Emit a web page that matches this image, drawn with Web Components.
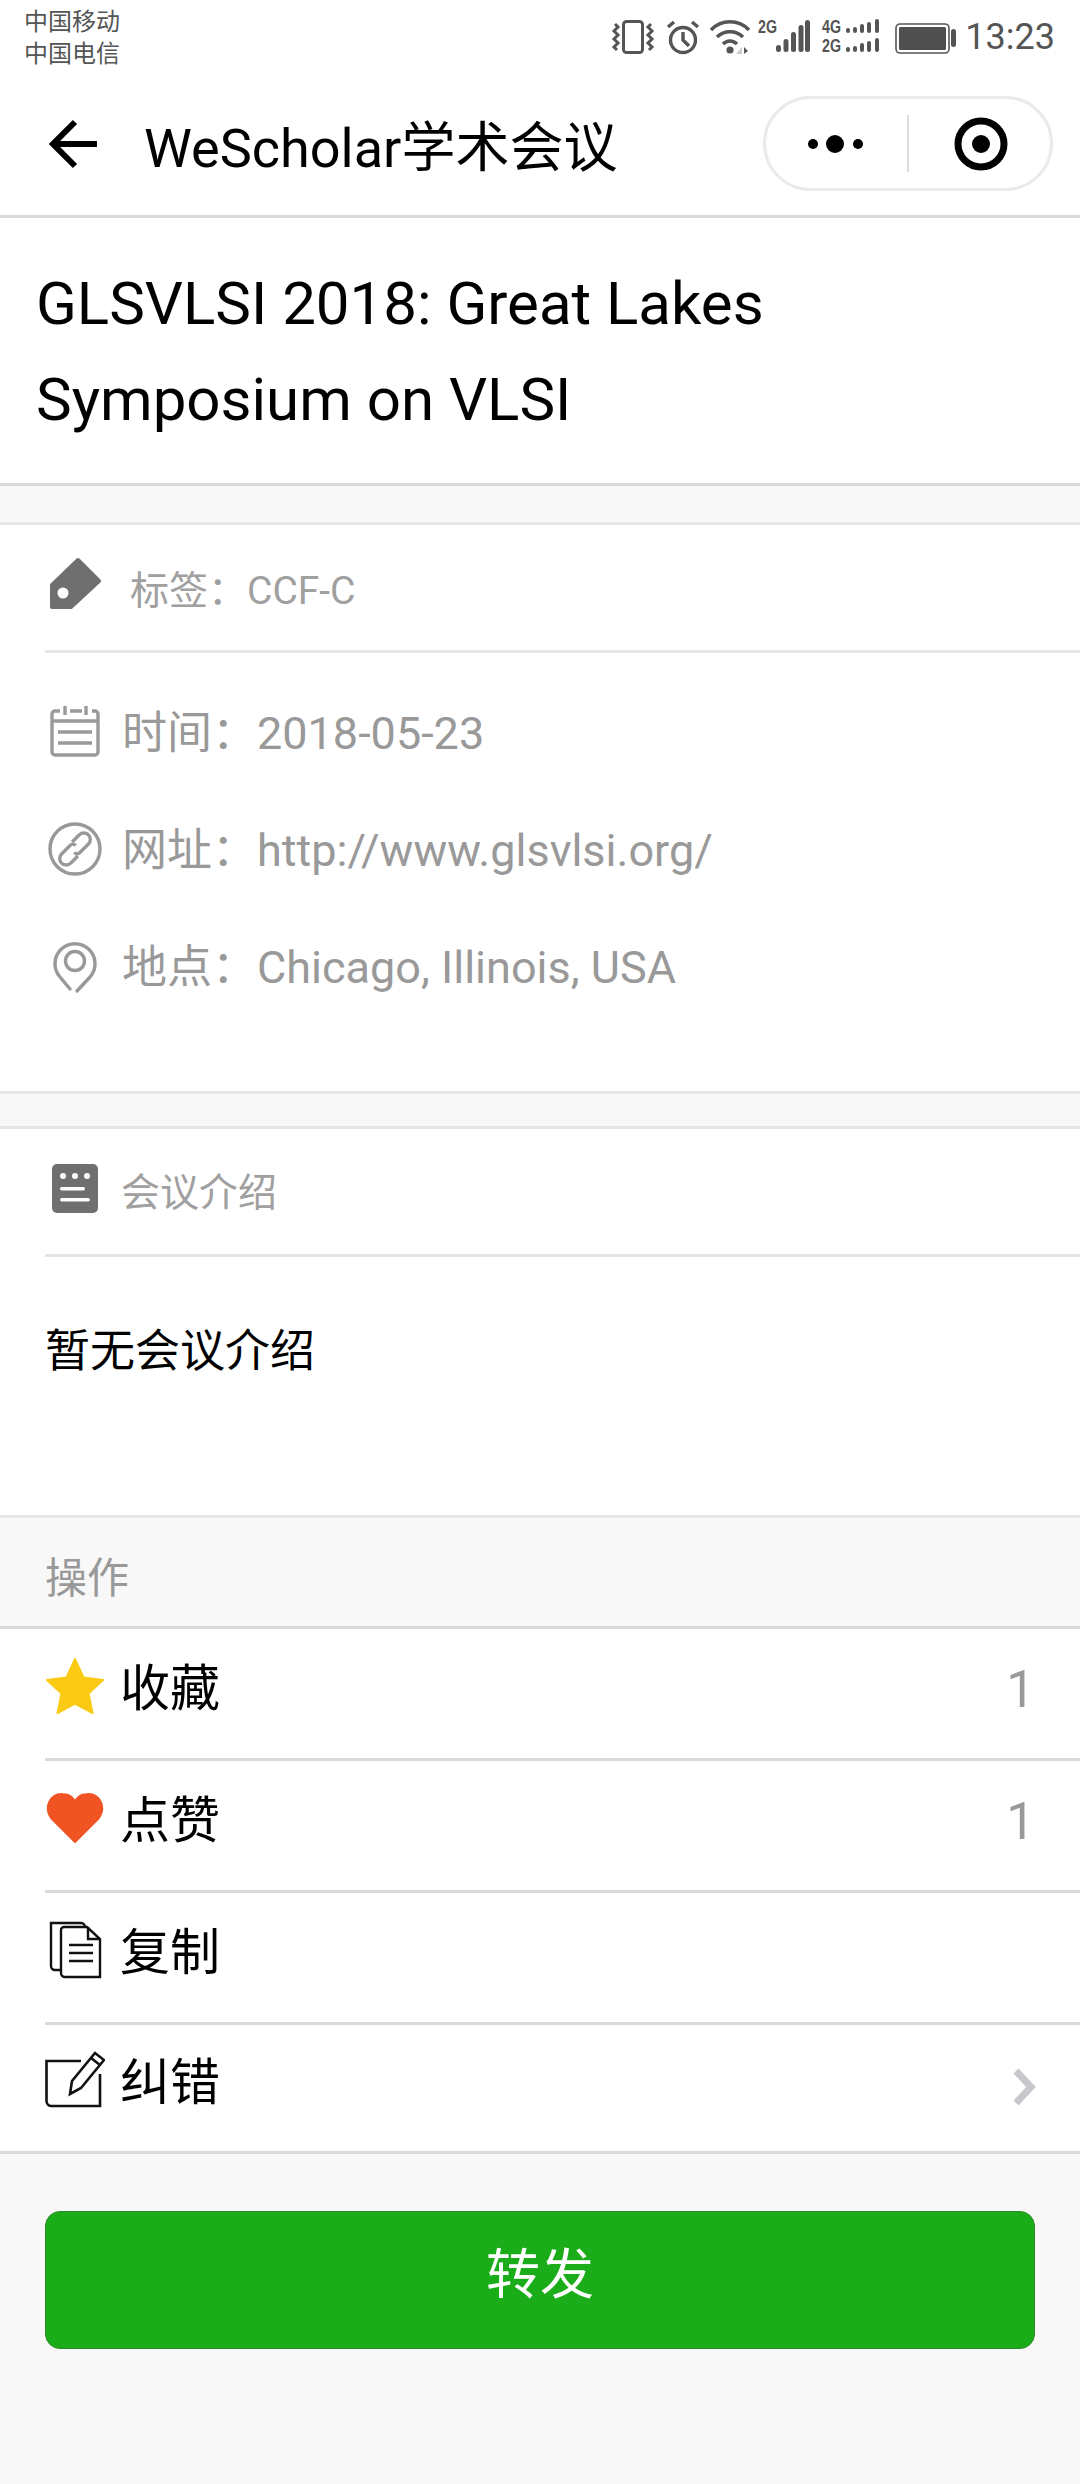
<!DOCTYPE html>
<html lang="zh">
<head>
<meta charset="utf-8">
<title>WeScholar</title>
<style>
  html, body { margin: 0; padding: 0; background: #f8f8f8; }
  body { width: 1080px; height: 2484px; overflow: hidden; font-family: Roboto, "Noto Sans CJK SC", sans-serif; }
</style>
</head>
<body>
  <status-bar></status-bar>
  <nav-bar title="WeScholar学术会议"></nav-bar>
  <conf-title>GLSVLSI 2018: Great Lakes Symposium on VLSI</conf-title>

  <page-gap></page-gap>
  <conf-card>
    <card-head icon="tag" style="--gap:25px;--pad:2px;--icon-top:-2px">标签：CCF-C</card-head>
    <div style="height:18px"></div>
    <info-row icon="calendar">时间：2018-05-23</info-row>
    <info-row icon="link">网址：http://www.glsvlsi.org/</info-row>
    <info-row icon="pin">地点：Chicago, Illinois, USA</info-row>
    <div style="height:69px"></div>
  </conf-card>

  <page-gap short></page-gap>
  <conf-card>
    <card-head icon="notes" style="--gap:16px;--pad:5px;--icon-top:0px">会议介绍</card-head>
    <intro-text>暂无会议介绍</intro-text>
  </conf-card>

  <action-title>操作</action-title>
  <action-list>
    <action-row icon="star" count="1">收藏</action-row>
    <action-row icon="heart" count="1">点赞</action-row>
    <action-row icon="copy">复制</action-row>
    <action-row icon="edit" arrow last>纠错</action-row>
  </action-list>
  <share-button>转发</share-button>

<script>
// icons are all drawn in a 60x60 box
const ICONS = {
  tag: `<path d="M33 4 L54 25 L26 51 H7 V29 Z" fill="#6f6f6f" stroke="#6f6f6f" stroke-width="4" stroke-linejoin="round"/><circle cx="18" cy="37" r="5.5" fill="#fff"/>`,
  calendar: `<g fill="none" stroke="#999" stroke-width="3.4"><path d="M15 9 H10 a3 3 0 0 0 -3 3 V50 a3 3 0 0 0 3 3 H50 a3 3 0 0 0 3 -3 V12 a3 3 0 0 0 -3 -3 H47"/><path d="M25 9 H37 M20 4 V13 M41 4 V13 M7 19 H53 M13 30 H47 M13 41 H47"/></g>`,
  link: `<g fill="none" stroke="#999" stroke-width="3.4"><circle cx="30" cy="30" r="25"/><g transform="rotate(-45 30 30)"><path d="M27 37 H17 a6.5 6.500 0 0 1 0 -13 H29 a4 4 0 0 1 4 4"/><path d="M33 23 H43 a6.5 6.500 0 0 1 0 13 H31 a4 4 0 0 1 -4 -4"/></g></g>`,
  pin: `<g fill="none" stroke="#999" stroke-width="3.4" stroke-linecap="round"><path d="M25 53 L15 41 A20 20 0 1 1 45 41 L32 55"/><circle cx="30" cy="25" r="9.5"/></g>`,
  notes: `<rect x="7" y="5" width="46" height="49" rx="5" fill="#6f6f6f"/><g fill="#fff"><circle cx="18" cy="17" r="3"/><circle cx="30" cy="17" r="3"/><circle cx="42" cy="17" r="3"/><rect x="15" y="28" width="25" height="3.5" rx="1.7"/><rect x="15" y="39" width="30" height="3.5" rx="1.7"/></g>`,
  star: `<path d="M30 3 L38.5 21.5 L58 24 L43.5 37.5 L47.5 57 L30 47.5 L12.5 57 L16.5 37.5 L2 24 L21.5 21.5 Z" fill="#fbca14" stroke="#fbca14" stroke-width="2" stroke-linejoin="round"/>`,
  heart: `<path d="M30 54 L7 31 C-2 20 5 5 18 6 C24 6 28 10 30 13 C32 10 36 6 42 6 C55 5 62 20 53 31 Z" fill="#f15423" stroke="#f15423" stroke-width="2" stroke-linejoin="round"/>`,
  copy: `<g fill="none" stroke="#111" stroke-width="2.4"><path d="M15 50 H10 a4 4 0 0 1 -4 -4 V3 H36 a4 4 0 0 1 4 4"/><path d="M42 7 H19 a3 3 0 0 0 -3 3 V53 a4 4 0 0 0 4 4 H55 V19 Z"/><path d="M43 7 V19 H55 M24 25 H48 M24 33 H48 M24 41 H48"/></g>`,
  edit: `<g fill="none" stroke="#111" stroke-width="2.6"><path d="M36 11 H1.5 V51 a5 5 0 0 0 5 5 H55 V24"/><path d="M25 44 L27 31 L50 3 L59 10 L36 38 Z M46 8 L55 15"/></g>`
};

class StatusBar extends HTMLElement {
  constructor() {
    super();
    const shadow = this.attachShadow({ mode: 'open' });
    shadow.innerHTML = `
      <style>
        :host { display: flex; justify-content: space-between; height: 72px; background: #fff; color: #555; }
        .carrier { padding: 4px 0 0 24px; font-size: 24px; line-height: 32px; font-family: "Noto Sans CJK SC", sans-serif; }
        .right { display: flex; align-items: flex-start; padding: 16px 0 0 0; }
        svg { display: block; }
        .time { font-size: 36px; line-height: 40px; margin: 1px 25px 0 8px; color: #555; }
        text { font-family: "Liberation Sans", sans-serif; font-weight: 700; font-size: 19px; fill: #555; }
      </style>
      <div class="carrier">中国移动<br>中国电信</div>
      <div class="right">
        <svg width="346" height="40" viewBox="0 0 346 40">
          <!-- vibrate -->
          <g fill="none" stroke="#555" stroke-width="3">
            <rect x="12.5" y="5.5" width="19" height="31" rx="3"/>
            <path d="M4 8 l3 3 l-4 4 l4 4 l-4 4 l4 4 l-4 4 l3 3 M40 8 l-3 3 l4 4 l-4 4 l4 4 l-4 4 l4 4 l-3 3"/>
          </g>
          <!-- alarm -->
          <g fill="none" stroke="#555" stroke-width="3.4">
            <circle cx="72" cy="24" r="12.5"/>
            <path d="M72 16 V24 L78 30 M57 11 L63 6 M87 11 L81 6"/>
          </g>
          <!-- wifi -->
          <g fill="none" stroke="#555" stroke-width="3.4">
            <path d="M100 14 C110 3 128 3 138 14 M106 21 C113 14 125 14 132 21 M112 28 C116 24 122 24 126 28"/>
          </g>
          <circle cx="119" cy="34" r="3.6" fill="#555"/>
          <path d="M125 38 L131 31 V38 Z" fill="#ccc"/>
          <path d="M133 31 V38 L137 35 Z" fill="#555"/>
          <!-- 2G + bars -->
          <text x="147" y="17" textLength="19" lengthAdjust="spacingAndGlyphs">2G</text>
          <g fill="#555">
            <rect x="165" y="29" width="5" height="7" rx="2.5"/>
            <rect x="172.500" y="23" width="5" height="13" rx="2.500"/>
            <rect x="180" y="16" width="5" height="20" rx="2.5"/>
            <rect x="187.500" y="9" width="5" height="27" rx="2.500"/>
            <rect x="194" y="4" width="5" height="32" rx="2.5"/>
          </g>
          <!-- dual sim -->
          <text x="211" y="17" textLength="19" lengthAdjust="spacingAndGlyphs">4G</text>
          <text x="211" y="36" textLength="19" lengthAdjust="spacingAndGlyphs">2G</text>
          <g fill="#555">
            <rect x="235" y="12" width="4" height="5" rx="2"/><rect x="242" y="11" width="4" height="6" rx="2"/><rect x="249" y="8" width="4" height="9" rx="2"/><rect x="256" y="6" width="4" height="11" rx="2"/><rect x="264" y="3" width="4" height="14" rx="2"/>
            <rect x="235" y="31" width="4" height="5" rx="2"/><rect x="242" y="30" width="4" height="6" rx="2"/><rect x="249" y="27" width="4" height="9" rx="2"/><rect x="256" y="25" width="4" height="11" rx="2"/><rect x="264" y="22" width="4" height="14" rx="2"/>
          </g>
          <!-- battery -->
          <rect x="285" y="8" width="53" height="29" rx="4" fill="none" stroke="#555" stroke-width="1.6"/>
          <rect x="288" y="11" width="47" height="23" rx="1.5" fill="#4f4f4f"/>
          <rect x="340" y="13" width="5" height="18" rx="2.5" fill="#555"/>
        </svg>
        <div class="time">13:23</div>
      </div>
    `;
  }
}
customElements.define('status-bar', StatusBar);

class NavBar extends HTMLElement {
  constructor() {
    super();
    const shadow = this.attachShadow({ mode: 'open' });
    const title = this.getAttribute('title') || '';
    shadow.innerHTML = `
      <style>
        :host { display: flex; align-items: center; height: 146px; box-sizing: border-box; background: #fff; border-bottom: 3px solid #d9d9d9; padding: 0 27px 0 49px; color: #000; }
        svg { display: block; flex: none; }
        .title { flex: 1; margin-left: 45px; font-size: 54px; white-space: nowrap; }
        .capsule { flex: none; display: flex; align-items: center; width: 290px; height: 95px; box-sizing: border-box; border: 3px solid #eaeaea; border-radius: 48px; }
        .half { flex: 1; display: flex; align-items: center; justify-content: center; }
        .dots { margin-right: 2px; }
        .target { margin-left: 2px; }
        .sep { width: 2px; height: 57px; background: #dcdcdc; }
      </style>
      <svg width="50" height="50" viewBox="0 0 50 50"><path d="M48 25 H6 M26 3 L4 25 L26 47" fill="none" stroke="#000" stroke-width="6"/></svg>
      <div class="title">${title}</div>
      <div class="capsule">
        <div class="half"><svg class="dots" width="60" height="20" viewBox="0 0 60 20"><circle cx="7" cy="10" r="5" /><circle cx="29" cy="10" r="9"/><circle cx="52" cy="10" r="5"/></svg></div>
        <div class="sep"></div>
        <div class="half"><svg class="target" width="54" height="54" viewBox="0 0 54 54"><circle cx="27" cy="27" r="23" fill="none" stroke="#000" stroke-width="7"/><circle cx="27" cy="27" r="9"/></svg></div>
      </div>
    `;
  }
}
customElements.define('nav-bar', NavBar);

class ConfTitle extends HTMLElement {
  constructor() {
    super();
    const shadow = this.attachShadow({ mode: 'open' });
    shadow.innerHTML = `
      <style>
        :host { display: block; box-sizing: border-box; height: 268px; padding: 38px 250px 0 36px; background: #fff; border-bottom: 3px solid #d9d9d9; color: #000; font-size: 60px; line-height: 96px; }
      </style>
      <slot></slot>
    `;
  }
}
customElements.define('conf-title', ConfTitle);

class PageGap extends HTMLElement {
  constructor() {
    super();
    const shadow = this.attachShadow({ mode: 'open' });
    shadow.innerHTML = `<style>
      :host { display: block; height: 36px; background: #f8f8f8; border-bottom: 3px solid #e5e5e5; }
      :host([short]) { height: 32px; }
    </style>`;
  }
}
customElements.define('page-gap', PageGap);

class ConfCard extends HTMLElement {
  constructor() {
    super();
    const shadow = this.attachShadow({ mode: 'open' });
    shadow.innerHTML = `
      <style>:host { display: block; background: #fff; border-bottom: 3px solid #e5e5e5; }</style>
      <slot></slot>
    `;
  }
}
customElements.define('conf-card', ConfCard);

class CardHead extends HTMLElement {
  constructor() {
    super();
    const shadow = this.attachShadow({ mode: 'open' });
    shadow.innerHTML = `
      <style>
        :host { display: block; margin-left: 45px; }
        .in { display: flex; align-items: center; height: 128px; box-sizing: border-box; padding-bottom: var(--pad, 0); border-bottom: 3px solid #e5e5e5; color: #a0a0a0; font-size: 39px; }
        svg { display: block; flex: none; margin: var(--icon-top, 0) var(--gap, 17px) 0 0; }
      </style>
      <div class="in">
        <svg width="60" height="60" viewBox="0 0 60 60">${ICONS[this.getAttribute('icon')]}</svg>
        <slot></slot>
      </div>
    `;
  }
}
customElements.define('card-head', CardHead);

class InfoRow extends HTMLElement {
  constructor() {
    super();
    const shadow = this.attachShadow({ mode: 'open' });
    shadow.innerHTML = `
      <style>
        :host { display: flex; align-items: center; height: 117px; padding-left: 45px; color: #999; font-size: 45px; white-space: nowrap; }
        svg { display: block; flex: none; margin: 4px 17px 0 0; }
      </style>
      <svg width="60" height="60" viewBox="0 0 60 60">${ICONS[this.getAttribute('icon')]}</svg>
      <slot></slot>
    `;
  }
}
customElements.define('info-row', InfoRow);

class IntroText extends HTMLElement {
  constructor() {
    super();
    const shadow = this.attachShadow({ mode: 'open' });
    shadow.innerHTML = `
      <style>:host { display: block; height: 258px; box-sizing: border-box; padding: 63px 45px 0; color: #000; font-size: 45px; line-height: 64px; }</style>
      <slot></slot>
    `;
  }
}
customElements.define('intro-text', IntroText);

class ActionTitle extends HTMLElement {
  constructor() {
    super();
    const shadow = this.attachShadow({ mode: 'open' });
    shadow.innerHTML = `
      <style>:host { display: block; height: 108px; box-sizing: content-box; line-height: 121px; padding-left: 45px; background: #f8f8f8; color: #999; font-size: 42px; border-bottom: 3px solid #d9d9d9; }</style>
      <slot></slot>
    `;
  }
}
customElements.define('action-title', ActionTitle);

class ActionList extends HTMLElement {
  constructor() {
    super();
    const shadow = this.attachShadow({ mode: 'open' });
    shadow.innerHTML = `
      <style>:host { display: block; background: #fff; border-bottom: 3px solid #d9d9d9; }</style>
      <slot></slot>
    `;
  }
}
customElements.define('action-list', ActionList);

class ActionRow extends HTMLElement {
  constructor() {
    super();
    const shadow = this.attachShadow({ mode: 'open' });
    const count = this.getAttribute('count') || '';
    const arrow = this.hasAttribute('arrow')
      ? `<svg class="arrow" width="24" height="38" viewBox="0 0 24 38"><path d="M4 3 L19 19 L4 35" fill="none" stroke="#c7c7cc" stroke-width="7"/></svg>`
      : '';
    shadow.innerHTML = `
      <style>
        :host { display: block; margin-left: 45px; }
        .in { display: flex; align-items: center; height: 132px; box-sizing: border-box; padding: 0 45px 20px 0; border-bottom: 3px solid #d9d9d9; color: #000; font-size: 50px; }
        :host([last]) .in { border-bottom: 0; height: 126px; }
        .ic { display: block; flex: none; margin: 4px 15px 0 0; }
        .name { flex: 1; }
        .count { color: #999; font-size: 51px; margin-top: 12px; }
        .arrow { display: block; flex: none; margin: 18px -1px 0 0; }
      </style>
      <div class="in">
        <svg class="ic" width="60" height="60" viewBox="0 0 60 60">${ICONS[this.getAttribute('icon')]}</svg>
        <span class="name"><slot></slot></span>
        <span class="count">${count}</span>
        ${arrow}
      </div>
    `;
  }
}
customElements.define('action-row', ActionRow);

class ShareButton extends HTMLElement {
  constructor() {
    super();
    const shadow = this.attachShadow({ mode: 'open' });
    shadow.innerHTML = `
      <style>
        :host { display: block; padding: 57px 45px 0; }
        .btn { display: flex; align-items: center; justify-content: center; height: 138px; box-sizing: border-box; padding-bottom: 20px; background: #1aad19; border: 1.5px solid #2a8a29; border-radius: 15px; color: #fff; font-size: 54px; }
      </style>
      <div class="btn"><slot></slot></div>
    `;
  }
}
customElements.define('share-button', ShareButton);
</script>
</body>
</html>
